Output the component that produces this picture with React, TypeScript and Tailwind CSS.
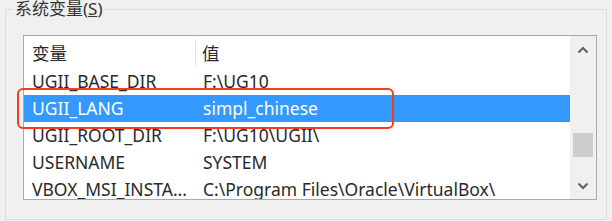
import * as React from "react";

const rows = [
  { name: "UGII_BASE_DIR", value: "F:\\UG10" },
  { name: "UGII_LANG", value: "simpl_chinese", selected: true },
  { name: "UGII_ROOT_DIR", value: "F:\\UG10\\UGII\\" },
  { name: "USERNAME", value: "SYSTEM" },
  { name: "VBOX_MSI_INSTA...", value: "C:\\Program Files\\Oracle\\VirtualBox\\" },
];

function Chevron({ up }: { up?: boolean }) {
  return (
    <svg width="12" height="8" viewBox="0 0 12 8">
      <path
        d={up ? "M1.5 6.5 L6 2 L10.5 6.5" : "M1.5 1.5 L6 6 L10.5 1.5"}
        fill="none"
        stroke="#606060"
        strokeWidth="2"
      />
    </svg>
  );
}

export default function App() {
  return (
    <div
      className="relative w-[612px] h-[221px] overflow-hidden bg-[#f0f0f0] pl-[5px] pt-[9px] text-[#2a2a2a]"
      style={{ fontFamily: '"Noto Sans", "Noto Sans CJK SC", sans-serif' }}
    >
      {/* group box */}
      <div className="relative w-[602px] h-[211px] border border-[#dcdcdc] pl-[17px] pt-[25px]">
        <span className="absolute left-[8px] top-[-12px] bg-[#f0f0f0] px-[1px] text-[17px] leading-[22px] text-[#333]">
          系统变量(<span className="underline">S</span>)
        </span>

        {/* list box */}
        <div className="flex w-[574px] h-[165px] border border-[#a9a9a9] bg-white overflow-hidden">
          <div className="flex-1 flex flex-col text-[17.5px]">
            <div className="flex h-[32px] shrink-0 items-center pt-[2px]">
              <div className="w-[172px] h-[28px] flex items-center pl-[8px] border-r border-[#e5e5e5]">变量</div>
              <div className="pl-[6px]">值</div>
            </div>
            {rows.map((r) => (
              <div
                key={r.name}
                className={
                  r.selected
                    ? "flex h-[27px] shrink-0 items-center bg-[#3399ff] text-white"
                    : "flex h-[27px] shrink-0 items-center"
                }
              >
                <div className="w-[173px] pl-[8px] whitespace-nowrap">{r.name}</div>
                <div className="pl-[6px] whitespace-nowrap">{r.value}</div>
              </div>
            ))}
          </div>

          {/* scrollbar */}
          <div className="w-[26px] shrink-0 flex flex-col items-center bg-[#f0f0f0]">
            <div className="h-[28px] w-full flex items-center justify-center">
              <Chevron up />
            </div>
            <div className="mt-[69px] w-[20px] h-[24px] bg-[#cdcdcd]" />
            <div className="mt-auto h-[27px] w-full flex items-center justify-center">
              <Chevron />
            </div>
          </div>
        </div>
      </div>

      {/* red annotation */}
      <div className="absolute left-[17px] top-[88px] w-[377px] h-[41px] rounded-[6px] border-2 border-[#f53c1e]" />
    </div>
  );
}
